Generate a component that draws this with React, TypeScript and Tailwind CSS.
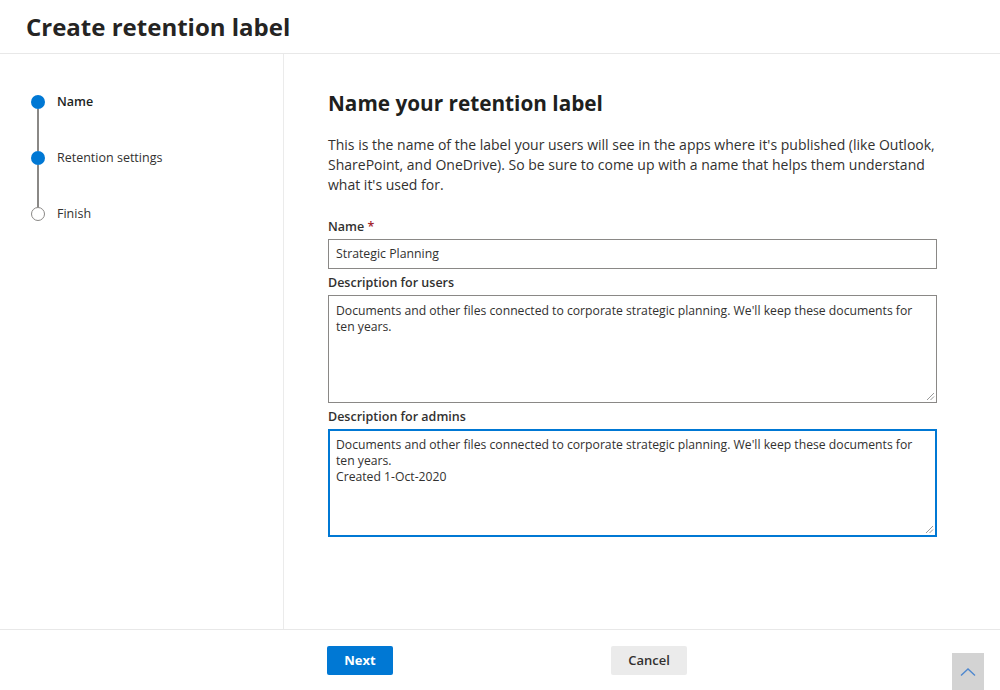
import React from "react";

const font = { fontFamily: '"Segoe UI", "Open Sans", "Noto Sans", sans-serif' };

function Step({ label, state, last }: { label: string; state: "active" | "done" | "todo"; last?: boolean }) {
  return (
    <div className="flex flex-col">
      <div className="flex items-center h-[14px]">
        {state === "todo" ? (
          <div className="w-[14px] h-[14px] rounded-full border-[1.5px] border-[#8a8886] bg-white" />
        ) : (
          <div className="w-[14px] h-[14px] rounded-full bg-[#0078d4]" />
        )}
        <span
          className={
            "ml-[12px] text-[12.5px] leading-[14px] " +
            (state === "active" ? "font-semibold text-[#201f1e]" : "text-[#323130]")
          }
        >
          {label}
        </span>
      </div>
      {!last && <div className="ml-[6px] w-[2px] h-[42px] bg-[#8a8886]" />}
    </div>
  );
}

export default function App() {
  return (
    <div className="relative w-[1000px] h-[690px] bg-white flex flex-col overflow-hidden" style={font}>
      <div className="h-[54px] shrink-0 border-b border-[#e8e8e8] px-[26px] flex items-center">
        <h1 className="text-[24px] font-bold text-[#252423] leading-none">Create retention label</h1>
      </div>
      <div className="flex flex-1 min-h-0">
        <div className="w-[284px] shrink-0 border-r border-[#ebebeb] pl-[31px] pt-[41px] flex flex-col">
          <Step label="Name" state="active" />
          <Step label="Retention settings" state="done" />
          <Step label="Finish" state="todo" last />
        </div>
        <div className="flex-1 pl-[44px] pt-[35px] pr-[63px]">
          <h2 className="text-[20.75px] font-bold leading-[28px] text-[#201f1e]">Name your retention label</h2>
          <p className="mt-[18px] text-[14px] leading-[20px] text-[#323130]">
            This is the name of the label your users will see in the apps where it's published (like Outlook,
            SharePoint, and OneDrive). So be sure to come up with a name that helps them understand what it's used
            for.
          </p>
          <div className="mt-[21px] h-[20px] pt-[1px] mb-[3px] text-[12.5px] font-semibold leading-[20px] text-[#323130]">
            Name <span className="text-[#a4262c]">*</span>
          </div>
          <div className="h-[30px] border border-[#8a8886] px-[7px] flex items-center text-[12.3px] text-[#323130]">
            Strategic Planning
          </div>
          <div className="mt-[3px] h-[20px] pt-[1px] mb-[3px] text-[12.5px] font-semibold leading-[20px] text-[#323130]">
            Description for users
          </div>
          <div className="relative h-[108px] border border-[#8a8886] px-[7px] pt-[7px] text-[12.2px] leading-[16px] text-[#323130] whitespace-nowrap">
            Documents and other files connected to corporate strategic planning. We'll keep these documents for
            <br />
            ten years.
            <Grip />
          </div>
          <div className="mt-[3px] h-[20px] pt-[1px] mb-[3px] text-[12.5px] font-semibold leading-[20px] text-[#323130]">
            Description for admins
          </div>
          <div className="relative h-[108px] border-2 border-[#0078d4] px-[6px] pt-[6px] text-[12.2px] leading-[16px] text-[#323130] whitespace-nowrap">
            Documents and other files connected to corporate strategic planning. We'll keep these documents for
            <br />
            ten years.
            <br />
            Created 1-Oct-2020
            <Grip />
          </div>
        </div>
      </div>
      <div className="h-[61px] shrink-0 border-t border-[#e8e8e8] flex items-start pt-[16px] pl-[327px]">
        <button className="w-[66px] h-[29px] bg-[#0078d4] text-white text-[13px] font-bold rounded-[2px]">Next</button>
        <button className="ml-[218px] w-[76px] h-[29px] bg-[#ebebeb] text-[#323130] text-[13px] font-semibold rounded-[2px]">
          Cancel
        </button>
      </div>
      <div className="absolute left-[952px] top-[653px] w-[32px] h-[37px] bg-[#d3d3d3] flex items-center justify-center">
        <svg width="16" height="10" viewBox="0 0 16 10" fill="none">
          <path d="M1 8.5 L8 2 L15 8.5" stroke="#4f88cf" strokeWidth="1.4" />
        </svg>
      </div>
    </div>
  );
}

function Grip() {
  return (
    <svg className="absolute right-[1px] bottom-[1px]" width="9" height="9" viewBox="0 0 9 9">
      <path d="M8 1 L1 8 M8 4.5 L4.5 8" stroke="#999" strokeWidth="1" />
    </svg>
  );
}
